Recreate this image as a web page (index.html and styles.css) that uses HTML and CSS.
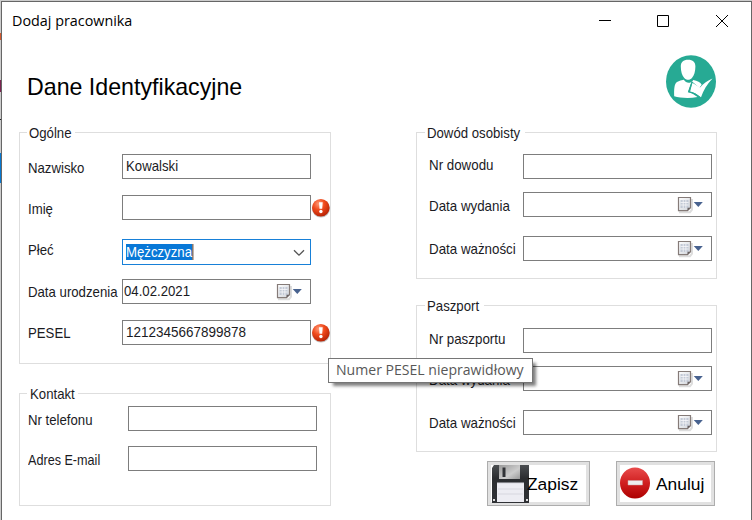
FILE: index.html
```html
<!DOCTYPE html>
<html lang="pl">
<head>
<meta charset="utf-8">
<title>Dodaj pracownika</title>
<link rel="stylesheet" href="styles.css">
</head>
<body>
<svg class="defs" width="0" height="0">
  <defs>
    <linearGradient id="paper" x1="0" y1="0" x2="1" y2="1"><stop offset="0" stop-color="#fff"/><stop offset="1" stop-color="#cfd3da"/></linearGradient>
    <radialGradient id="alert" cx=".38" cy=".28" r=".75"><stop offset="0" stop-color="#ff9a78"/><stop offset=".45" stop-color="#f04a1c"/><stop offset="1" stop-color="#b52205"/></radialGradient>
    <linearGradient id="stop" x1="0" y1="0" x2="0" y2="1"><stop offset="0" stop-color="#e84b4b"/><stop offset=".5" stop-color="#d01f20"/><stop offset="1" stop-color="#ad0000"/></linearGradient>
    <linearGradient id="disk" x1="0" y1="0" x2="0" y2="1"><stop offset="0" stop-color="#4b4e51"/><stop offset=".35" stop-color="#2b2d30"/><stop offset="1" stop-color="#303236"/></linearGradient>
    <linearGradient id="metal" x1="0" y1="0" x2="1" y2="1"><stop offset="0" stop-color="#999"/><stop offset=".6" stop-color="#ccc"/><stop offset="1" stop-color="#999"/></linearGradient>
    <symbol id="calendar" viewBox="0 0 28 18">
      <path d="M2 16.200h11l2-2.500V3" fill="none" stroke="#ddd" stroke-width="2"/>
      <path d="M1.500 1.500h12v10.200l-3 3h-9z" fill="url(#paper)" stroke="#857b78" stroke-width="1.200"/>
      <path d="M3.500 4h8v8h-8z" fill="#c3cad6"/>
      <path d="M3.500 6.500h8M3.500 9h8M6.200 4v8M8.900 4v8" stroke="#f7f8fa" stroke-width=".8"/>
      <path d="M10.500 14.800v-3h3z" fill="#665f60"/>
      <path d="M16.700 6h9.100l-4.500 5z" fill="#48628f"/>
    </symbol>
    <symbol id="error" viewBox="0 0 20 20">
      <circle cx="10" cy="10.600" r="9" fill="#777" opacity=".45"/>
      <circle cx="9.800" cy="9.700" r="8.800" fill="url(#alert)"/>
      <path d="M8 4.200h3.700l-.5 6.600H8.500z" fill="#fff"/>
      <circle cx="9.900" cy="13.500" r="1.700" fill="#fff"/>
    </symbol>
  </defs>
</svg>
<div class="window">
  <header class="titlebar">
    <span class="caption">Dodaj pracownika</span>
    <svg class="controls" width="132" height="14" viewBox="0 0 132 14" fill="none" stroke="#000" stroke-width="1">
      <path d="M0 6.500h12"/><path d="M58.500 1.500h11v11h-11z"/><path d="M117 1l12 12M129 1l-12 12"/>
    </svg>
  </header>
  <div class="heading">
    <h1>Dane Identyfikacyjne</h1>
    <svg class="avatar" width="50" height="53" viewBox="0 0 50 53">
      <ellipse cx="25" cy="26.500" rx="25" ry="26.300" fill="#27aa94"/>
      <path d="M14.800 11.500c0-4.500 2.500-6.800 7.300-6.800s7.300 2.300 7.300 6.800c0 5-1.300 9-3.300 11.200-2.300 2.700-5.700 2.700-8 0-2-2.200-3.300-6.200-3.300-11.200z" fill="#fff"/>
      <path d="M17.800 24.800c2.500 4 7.200 4 9.500.2 4 .6 7.200 2.200 8.400 4.800l-2.300 3-7.600-6.500-3.600 10.500 4.500 2 4.800 3.300c-8 1.600-17.500 1-23.300-.8C8 34.500 8 28.500 11.500 26.700c1.800-.9 4-1.500 6.300-1.900z" fill="#fff"/>
      <path d="M26.300 27.700l7.700 4.700c3.300-3.800 7.700-7 12.500-9-5.200 5.500-9.200 11.800-11.500 18.900-3.300-2.900-7-4.700-10.900-5.600z" fill="#fff"/>
      <path d="M26 27.300l-3.300 9.500c4.500.9 8 2.600 10.800 5.400" fill="none" stroke="#27aa94" stroke-width="1.300"/>
    </svg>
  </div>
  <main class="columns">
    <div class="column">
      <section class="group general">
        <h2><span>Ogólne</span></h2>
        <div class="row"><label>Nazwisko</label><div class="field"><span>Kowalski</span></div></div>
        <div class="row r2"><label>Imię</label><div class="field"></div><svg class="error"><use href="#error"/></svg></div>
        <div class="row r3"><label>Płeć</label><div class="field combo"><span class="selected">Mężczyzna</span><svg class="chevron" width="12" height="8" viewBox="0 0 12 8"><path d="M1 1.200l5 5 5-5" fill="none" stroke="#555" stroke-width="1.300"/></svg></div></div>
        <div class="row r4"><label>Data urodzenia</label><div class="field date"><span>04.02.2021</span><svg class="calendar"><use href="#calendar"/></svg></div></div>
        <div class="row r5"><label>PESEL</label><div class="field"><span class="digits">1212345667899878</span></div><svg class="error"><use href="#error"/></svg></div>
      </section>
      <section class="group contact">
        <h2><span>Kontakt</span></h2>
        <div class="row"><label>Nr telefonu</label><div class="field"></div></div>
        <div class="row r2"><label>Adres E-mail</label><div class="field"></div></div>
      </section>
    </div>
    <div class="column">
      <section class="group document">
        <h2><span>Dowód osobisty</span></h2>
        <div class="row"><label>Nr dowodu</label><div class="field"></div></div>
        <div class="row r2"><label>Data wydania</label><div class="field date"><svg class="calendar"><use href="#calendar"/></svg></div></div>
        <div class="row r3"><label>Data ważności</label><div class="field date"><svg class="calendar"><use href="#calendar"/></svg></div></div>
      </section>
      <section class="group document passport">
        <h2><span>Paszport</span></h2>
        <div class="row"><label>Nr paszportu</label><div class="field"></div></div>
        <div class="row r2"><label>Data wydania</label><div class="field date"><svg class="calendar"><use href="#calendar"/></svg></div></div>
        <div class="row r3"><label>Data ważności</label><div class="field date"><svg class="calendar"><use href="#calendar"/></svg></div></div>
      </section>
      <div class="actions">
        <button class="save">
          <svg width="38" height="38" viewBox="0 0 38 38">
            <path d="M2 0h35v38H0V3z" fill="url(#disk)"/>
            <path d="M7 0h21v14H7z" fill="url(#metal)"/><path d="M10.500 2.500h3v9.500h-3z" fill="#303236"/>
            <path d="M5 18h27v19H5z" fill="#ededf3"/><path d="M5 18h27M6 24h25M6 29h25" stroke="#d7d7df" stroke-width="1"/>
            <path d="M1 34h2v2H1zM34 34h2v2h-2z" fill="#ddd"/>
          </svg>
          <span>Zapisz</span>
        </button>
        <button class="cancel">
          <svg width="30" height="32" viewBox="0 0 30 32">
            <ellipse cx="15" cy="16" rx="15" ry="15.500" fill="url(#stop)"/>
            <path d="M8 13.500h14.500v4.500H8z" fill="#eee" stroke="#c9a0a0" stroke-width=".5"/>
          </svg>
          <span>Anuluj</span>
        </button>
      </div>
    </div>
  </main>
  <div class="tooltip"><span>Numer PESEL nieprawidłowy</span></div>
</div>
</body>
</html>
```
FILE: styles.css
```css
* { box-sizing: border-box; }
body {
  margin: 0;
  width: 752px;
  height: 520px;
  overflow: hidden;
  padding: 1px 0 0 1px;
  background: linear-gradient(#ccc 0 33px, #d3592e 33px 40px, #ccc 40px 80px, #7b2451 80px 92px, #ccc 92px 119px, #222 119px 120px, #ccc 120px 153px, #0878d0 153px 183px, #ccc 183px);
  font: 14.5px/16px "Liberation Sans", Arial, sans-serif;
  color: #1b1b1f;
}
.defs { position: absolute; }
.window {
  position: relative;
  width: 751px;
  height: 519px;
  border: solid #666;
  border-width: 1px 1px 0 1px;
  background: #fff;
}
.titlebar {
  display: flex;
  justify-content: space-between;
  height: 36px;
  padding: 8px 20px 0 10px;
}
.caption {
  font: 14px/20px "Open Sans", sans-serif;
  color: #000;
  transform: scaleX(1.025);
  transform-origin: left;
  margin-top: 1px;
}
.controls { margin-top: 4px; }
.heading {
  display: flex;
  justify-content: space-between;
  height: 94px;
  padding: 16px 35px 0 25px;
}
.avatar { margin-top: 1px; }
h1 {
  margin: 19px 0 0;
  font-size: 23.2px;
  line-height: 28px;
  font-weight: 400;
  color: #000;
}
.columns {
  display: grid;
  grid-template-columns: 312px 301px;
  column-gap: 85px;
  padding-left: 17px;
}
.group {
  height: 232px;
  border: 1px solid #dedede;
  padding-left: 8px;
}
h2 {
  width: max-content;
  height: 16px;
  margin: -8px 0 13px -1px;
  padding: 0 3px 0 2px;
  background: #fff;
  font-size: 14.5px;
  line-height: 16px;
  font-weight: 400;
}
h2 span, label, .field span { display: block; white-space: nowrap; transform: scaleX(.91); transform-origin: left; }
h2 span { margin-right: -4px; }
.row { display: flex; align-items: flex-start; height: 25px; }
label { width: 94px; flex: none; margin-top: 6px; }
.field {
  display: flex;
  justify-content: space-between;
  flex: none;
  width: 189px;
  height: 25px;
  padding: 3px 0 0 3px;
  border: 1px solid #7d7d7d;
  background: #fff;
}
.date { padding-left: 1px; padding-right: 6px; }
.calendar { width: 28px; height: 18px; margin-left: auto; }
.error { width: 20px; height: 20px; margin: 3px 0 0 0; flex: none; }
.general .r2 { margin-top: 16px; }
.general .r3 { margin-top: 19px; height: 26px; }
.general .r3 label { margin-top: 3px; }
.general .r4 { margin-top: 14px; }
.general .r4 label { margin-top: 5px; }
.general .r5 { margin-top: 16px; }
.general .r5 label { margin-top: 5px; }
.field .digits { transform: scaleX(.93); }
.combo { height: 26px; border-color: #1780d8; padding: 4px 5px 0 3px; }
.field .selected { height: 16px; background: #0878d7; color: #fff; border-right: 1px solid #e87820; }
.chevron { margin-top: 5px; }

.contact { height: 113px; margin-top: 29px; }
.contact h2 { margin-bottom: 4px; }
.contact h2 span { margin-left: 1px; }
.contact label { width: 100px; }
.contact .r2 { margin-top: 15px; }
.contact .r2 label { transform: scaleX(.87); }

.document { height: 147px; padding-left: 12px; }
.document h2 { margin-left: -4px; }
.document h2 span { margin-right: -7px; }
.document label { margin-top: 3px; transform: scaleX(.92); }
.document .r2 { margin-top: 13px; }
.document .r2 label { margin-top: 6px; }
.document .r3 { margin-top: 19px; }
.document .r3 label { margin-top: 5px; }
.passport { margin-top: 26px; }
.passport h2 { margin-bottom: 14px; }
.passport h2 span { margin-right: -3px; }

.actions { display: flex; gap: 26px; margin: 9px 0 0 71px; }
button {
  display: flex;
  align-items: flex-start;
  width: 103px;
  height: 45px;
  padding: 0;
  border: 1px solid #adadad;
  background: #fff;
  box-shadow: inset 0 0 0 3px #e1e1e1;
  font: 17.4px/20px "Liberation Sans", Arial, sans-serif;
  color: #000;
}
button span { margin-top: 12px; }
.save svg { margin: 3px 0 0 4px; }
.save span { margin-left: -3px; }
.cancel { width: 99px; }
.cancel svg { margin: 5px 0 0 3px; }
.cancel span { margin-left: 6px; }
.tooltip {
  position: absolute;
  left: 326px;
  top: 356px;
  width: 205px;
  height: 25px;
  padding: 1px 0 0 7px;
  border: 1px solid #767676;
  background: #fff;
  box-shadow: 4px 4px 3px -1px rgba(0, 0, 0, .5);
  font: 14.5px/20px "Open Sans", sans-serif;
  color: #575757;
}
.tooltip span { display: block; width: max-content; white-space: nowrap; transform: scaleX(.97); transform-origin: left; }
```
